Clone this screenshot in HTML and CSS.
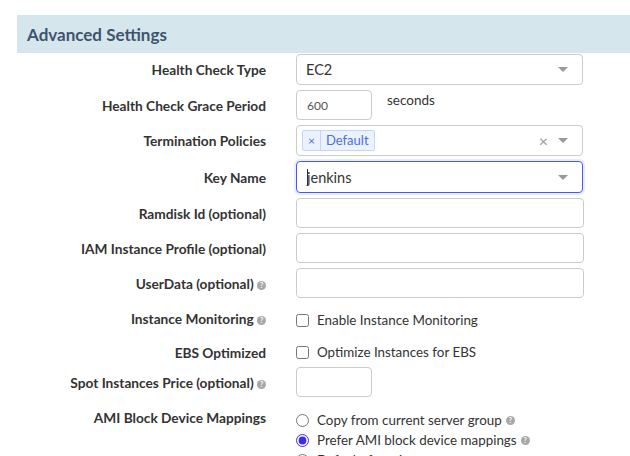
FILE: index.html
```html
<!DOCTYPE html>
<html>
<head>
<meta charset="utf-8">
<link rel="stylesheet" href="styles.css">
</head>
<body>
<div class="panel">
  <div class="heading">Advanced Settings</div>
  <div class="form">
    <div class="row r1">
      <div class="lbl">Health Check Type</div>
      <div class="select"><span class="val">EC2</span><span class="caret"></span></div>
    </div>
    <div class="row r2">
      <div class="lbl">Health Check Grace Period</div>
      <div class="inline">
        <div class="input small"><span class="num">600</span></div>
        <span class="suffix">seconds</span>
      </div>
    </div>
    <div class="row r3">
      <div class="lbl">Termination Policies</div>
      <div class="select multi">
        <span class="tag"><span class="tag-x">×</span><span class="tag-t">Default</span></span>
        <span class="clear">×</span><span class="caret"></span>
      </div>
    </div>
    <div class="row r4">
      <div class="lbl">Key Name</div>
      <div class="select focus"><span class="cursor"></span><span class="val">jenkins</span><span class="caret"></span></div>
    </div>
    <div class="row r5">
      <div class="lbl">Ramdisk Id (optional)</div>
      <div class="input wide"></div>
    </div>
    <div class="row r6">
      <div class="lbl">IAM Instance Profile (optional)</div>
      <div class="input wide"></div>
    </div>
    <div class="row r7">
      <div class="lbl">UserData (optional) <span class="help">?</span></div>
      <div class="input wide"></div>
    </div>
    <div class="row r8">
      <div class="lbl">Instance Monitoring <span class="help">?</span></div>
      <label class="check"><input type="checkbox"><span>Enable Instance Monitoring</span></label>
    </div>
    <div class="row r9">
      <div class="lbl">EBS Optimized</div>
      <label class="check"><input type="checkbox"><span>Optimize Instances for EBS</span></label>
    </div>
    <div class="row r10">
      <div class="lbl">Spot Instances Price (optional) <span class="help">?</span></div>
      <div class="input small"></div>
    </div>
    <div class="row r11">
      <div class="lbl">AMI Block Device Mappings</div>
      <div class="radios">
        <label class="radio"><input type="radio" name="ami"><span>Copy from current server group</span> <span class="help">?</span></label>
        <label class="radio"><input type="radio" name="ami" checked><span>Prefer AMI block device mappings</span> <span class="help">?</span></label>
        <label class="radio"><input type="radio" name="ami"><span>Default: from instance type</span> <span class="help">?</span></label>
      </div>
    </div>
  </div>
</div>
</body>
</html>
```
FILE: styles.css
```css
html, body {
  margin: 0;
  padding: 0;
  background: #fff;
  overflow: hidden;
}
body {
  font-family: Lato, "Noto Sans", "Liberation Sans", sans-serif;
  color: #333;
  width: 630px;
  height: 456px;
}
.heading {
  margin: 15px 0 0 17px;
  height: 38px;
  background: #d6e6ed;
  padding-left: 10px;
  display: flex;
  align-items: center;
  font-size: 17px;
  font-weight: 700;
  color: #3e5470;
}
.form {
  display: flex;
  flex-direction: column;
  padding-top: 1px;
}
.row {
  display: grid;
  grid-template-columns: 266px 288px;
  column-gap: 30px;
  align-items: center;
}
.lbl {
  text-align: right;
  font-weight: 700;
  font-size: 13.7px;
  color: #333;
  white-space: nowrap;
}
.help {
  display: inline-block;
  width: 9px;
  height: 9px;
  border-radius: 50%;
  background: #a8a8a8;
  color: #fff;
  font-size: 7px;
  font-weight: 700;
  line-height: 9px;
  text-align: center;
  vertical-align: 1px;
}
.select {
  box-sizing: border-box;
  width: 287px;
  height: 31px;
  border: 1px solid #ccc;
  border-radius: 4px;
  display: flex;
  align-items: center;
  padding: 0 14px 0 9px;
  font-size: 14.5px;
  color: #333;
}
.select .val { flex: 1; }
.caret {
  width: 0;
  height: 0;
  border-left: 5px solid transparent;
  border-right: 5px solid transparent;
  border-top: 5px solid #999;
}
.multi { padding-left: 5px; }
.tag {
  display: flex;
  height: 21px;
  box-sizing: border-box;
  border: 1px solid #c2d6f7;
  background: #ebf2fe;
  border-radius: 2px;
  color: #4a6fe3;
  font-size: 13px;
  align-items: stretch;
}
.tag-x {
  width: 17px;
  border-right: 1px solid #c2d6f7;
  text-align: center;
  font-size: 12px;
  line-height: 19px;
}
.tag-t {
  padding: 0 5px;
  line-height: 19px;
}
.clear {
  margin-left: auto;
  margin-right: 10px;
  color: #999;
  font-size: 16px;
}
.focus {
  border-color: #4d55f2;
  box-shadow: 0 0 0 2px #e8ecff;
  height: 32px;
  padding-left: 10px;
}
.cursor {
  width: 1px;
  height: 17px;
  background: #333;
  margin-right: -1px;
}
.r1 { margin-bottom: 5px; }
.r2 { margin-bottom: 5px; }
.r3 { margin-bottom: 5px; }
.r4 { margin-bottom: 5px; }
.r5 { margin-bottom: 5px; }
.r6 { margin-bottom: 5px; }
.r7 { margin-bottom: 5px; }
.input {
  box-sizing: border-box;
  height: 30px;
  border: 1px solid #ccc;
  border-radius: 4px;
}
.input.wide { width: 288px; }
.input.small { width: 76px; display: flex; align-items: center; padding-left: 10px; }
.num { font-size: 12px; color: #555; }
.inline {
  display: flex;
  align-items: flex-start;
}
.suffix {
  margin-left: 15px;
  font-size: 13.5px;
  color: #333;
  line-height: 20px;
}
.check, .radio {
  display: flex;
  align-items: center;
  font-size: 13.4px;
  color: #333;
}
.check input, .radio input {
  margin: 0 8px 0 0;
  width: 13px;
  height: 13px;
  accent-color: #3b2cf2;
}
.r8 { height: 34px; }
.r8 .lbl { padding-bottom: 3px; }
.r9 { height: 22px; margin-top: 4px; margin-bottom: 4px; }
.r10 { margin-bottom: 0; }
.r11 { align-items: start; margin-top: 13px; }
.r11 .lbl { line-height: 16px; }
.radios { display: flex; flex-direction: column; }
.radio { height: 20px; flex: none; }
.radio .help { margin-left: 4px; }
```
